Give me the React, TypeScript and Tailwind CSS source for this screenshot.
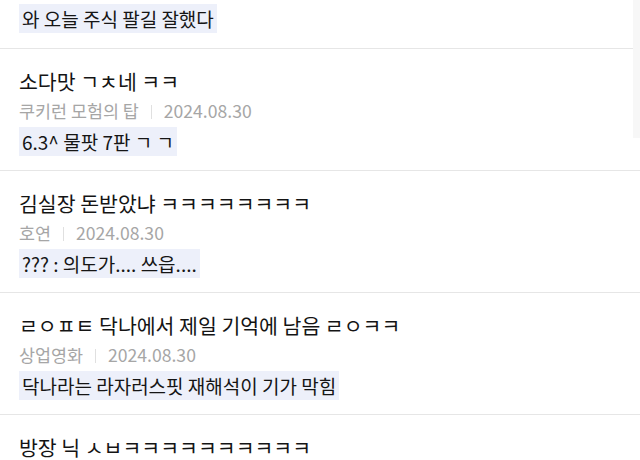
import React from "react";

type Item = { title: string; author: string; date: string; comment: string };

const items: Item[] = [
  { title: "소다맛 ㄱㅊ네 ㅋㅋ", author: "쿠키런 모험의 탑", date: "2024.08.30", comment: "6.3^ 물팟 7판 ㄱ ㄱ" },
  { title: "김실장 돈받았냐 ㅋㅋㅋㅋㅋㅋㅋㅋ", author: "호연", date: "2024.08.30", comment: "??? : 의도가.... 쓰읍...." },
  { title: "ㄹㅇㅍㅌ 닥나에서 제일 기억에 남음 ㄹㅇㅋㅋ", author: "상업영화", date: "2024.08.30", comment: "닥나라는 라자러스핏 재해석이 기가 막힘" },
];

const font = { fontFamily: '"Noto Sans CJK KR", "Noto Sans", sans-serif' };

function Highlight({ children }: { children: React.ReactNode }) {
  return (
    <div className="flex">
      <span className="h-[29px] px-[3px] bg-[#edf0fa] text-[19px] leading-[29px] text-[#151515] whitespace-nowrap">
        {children}
      </span>
    </div>
  );
}

export default function App() {
  return (
    <div className="relative w-[640px] h-[460px] overflow-hidden bg-white" style={font}>
      <div className="flex flex-col">
        <div className="pl-[19px] pt-[4px] pb-[15px] border-b border-[#e6e6e6]">
          <Highlight>와 오늘 주식 팔길 잘했다</Highlight>
        </div>
        {items.map((it) => (
          <div key={it.title} className="pl-[19px] pt-[17px] pb-[14px] border-b border-[#e6e6e6]">
            <div className="text-[20.5px] leading-[30px] text-[#141414] whitespace-nowrap">{it.title}</div>
            <div className="flex items-center h-[31px] text-[17.4px] text-[#a6a6a6] whitespace-nowrap">
              <span>{it.author}</span>
              <span className="mx-[12px] w-px h-[14px] bg-[#e0e0e0]" />
              <span className="text-[17.6px]">{it.date}</span>
            </div>
            <Highlight>{it.comment}</Highlight>
          </div>
        ))}
        <div className="pl-[19px] pt-[17px]">
          <div className="text-[20.5px] leading-[30px] text-[#141414] whitespace-nowrap">방장 닉 ㅅㅂㅋㅋㅋㅋㅋㅋㅋㅋㅋㅋ</div>
        </div>
      </div>
      <div className="absolute right-0 top-0 w-[7px] h-[138px] bg-[#f7f7f7]" />
    </div>
  );
}
